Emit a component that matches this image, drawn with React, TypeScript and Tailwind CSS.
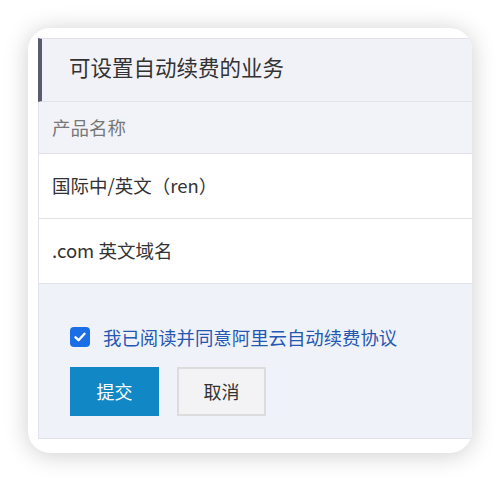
import { useState } from "react";

const rows = ["国际中/英文（ren）", ".com 英文域名"];

export default function App() {
  const [agreed, setAgreed] = useState(true);

  return (
    <div
      className="w-[500px] h-[482px] bg-white pt-[28px] pl-[28px]"
      style={{ fontFamily: '"Noto Sans CJK SC", "Liberation Sans", sans-serif' }}
    >
      <div className="w-[444px] h-[425px] bg-white rounded-[22px] overflow-hidden shadow-[0_2px_24px_rgba(0,0,0,0.2)] pt-[10px] pl-[10px]">
        <div className="w-[480px]">
          {/* header */}
          <div className="h-[64px] flex items-center bg-[#f1f2f8] border-t border-b border-[#e2e3ea] border-l-4 border-l-[#5b5b6f] pl-[27px] pb-[6px]">
            <span className="text-[21.5px] text-[#333] leading-none">可设置自动续费的业务</span>
          </div>

          <div className="border-l border-[#e2e3ea]">
            <div className="h-[52px] flex items-center bg-[#f2f3f9] border-b border-[#e2e3ea] pl-[13px]">
              <span className="text-[18.5px] text-[#777] leading-none">产品名称</span>
            </div>

            {rows.map((r) => (
              <div key={r} className="h-[65px] flex items-center bg-white border-b border-[#e2e3ea] pl-[13px] pb-[2px]">
                <span className="text-[18.5px] text-[#333] leading-none">{r}</span>
              </div>
            ))}

            <div className="h-[155px] bg-[#f0f2fa] border-b border-[#e2e3ea] pl-[31px] pt-[43px]">
              <label className="flex items-center gap-[13px] cursor-pointer">
                <span
                  onClick={() => setAgreed(!agreed)}
                  className={
                    agreed
                      ? "w-[20px] h-[20px] rounded-[4px] bg-[#1a6ee6] flex items-center justify-center"
                      : "w-[20px] h-[20px] rounded-[4px] bg-white border border-[#bbb]"
                  }
                >
                  {agreed && (
                    <svg width="14" height="14" viewBox="0 0 14 14" fill="none">
                      <path d="M2.5 7.3 L5.6 10.2 L11.5 3.8" stroke="white" strokeWidth="2.4" strokeLinecap="round" strokeLinejoin="round" />
                    </svg>
                  )}
                </span>
                <span className="text-[18.4px] text-[#2558b2] leading-none">我已阅读并同意阿里云自动续费协议</span>
              </label>

              <div className="flex gap-[18px] mt-[20px]">
                <button className="w-[89px] h-[49px] bg-[#1188c5] text-white text-[18px]">提交</button>
                <button className="w-[89px] h-[49px] bg-[#f3f3f5] border-2 border-[#dcdcdc] text-[#333] text-[18px]">取消</button>
              </div>
            </div>
          </div>
        </div>
      </div>
    </div>
  );
}
